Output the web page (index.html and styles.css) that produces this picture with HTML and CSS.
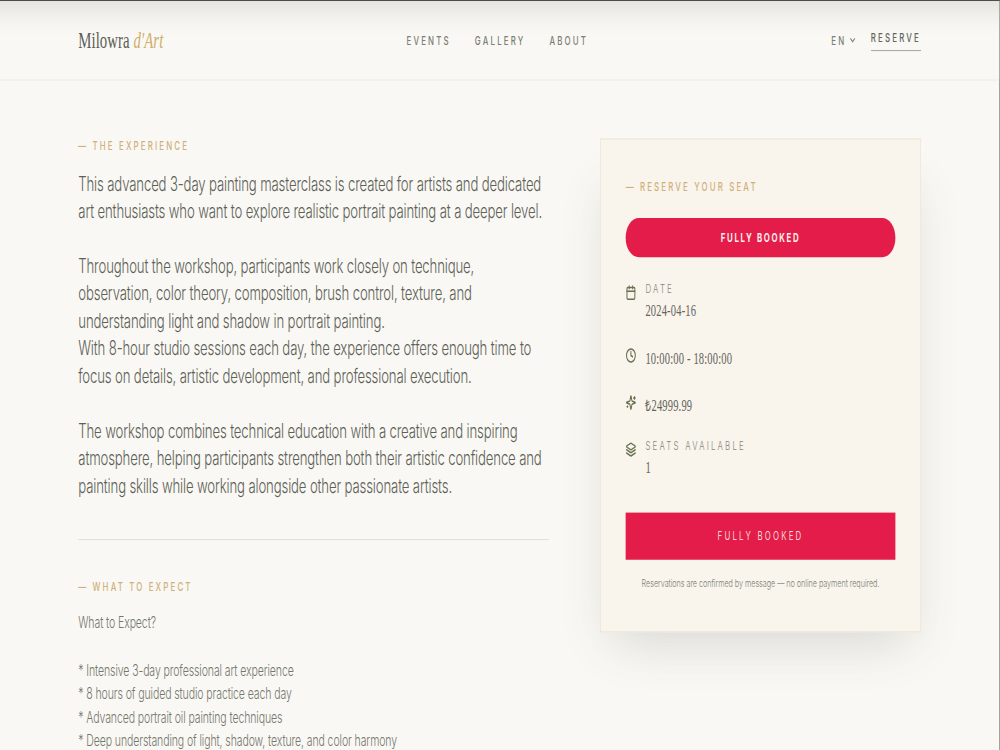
FILE: index.html
```html
<!DOCTYPE html>
<html lang="en">
<head>
<meta charset="utf-8">
<title>Milowra d'Art</title>
<link rel="stylesheet" href="styles.css">
</head>
<body>
<div class="viewport">
<div class="page">
  <header class="header">
    <div class="header-inner">
      <a class="logo"><span class="logo-name">Milowra</span> <em>d'Art</em></a>
      <nav class="nav"><a>Events</a><a>Gallery</a><a>About</a></nav>
      <div class="actions">
        <span class="lang">EN <svg width="12" height="12" viewBox="0 0 24 24"><path d="m6 9 6 6 6-6"/></svg></span>
        <a class="reserve">Reserve</a>
      </div>
    </div>
  </header>
  <main class="main">
    <div class="story">
      <section class="experience">
        <div class="eyebrow">— The Experience</div>
        <div class="lead">This advanced 3-day painting masterclass is created for artists and dedicated<br>art enthusiasts who want to explore realistic portrait painting at a deeper level.<br><br>Throughout the workshop, participants work closely on technique,<br>observation, color theory, composition, brush control, texture, and<br>understanding light and shadow in portrait painting.<br>With 8-hour studio sessions each day, the experience offers enough time to<br>focus on details, artistic development, and professional execution.<br><br>The workshop combines technical education with a creative and inspiring<br>atmosphere, helping participants strengthen both their artistic confidence and<br>painting skills while working alongside other passionate artists.</div>
      </section>
      <section class="expect">
        <div class="eyebrow">— What to Expect</div>
        <div class="list">What to Expect?<br><br>* Intensive 3-day professional art experience<br>* 8 hours of guided studio practice each day<br>* Advanced portrait oil painting techniques<br>* Deep understanding of light, shadow, texture, and color harmony</div>
      </section>
    </div>
    <aside class="card">
      <div class="eyebrow">— Reserve Your Seat</div>
      <div class="pill">Fully Booked</div>
      <div class="rows">
        <div class="row">
          <svg width="16" height="16" viewBox="0 0 24 24"><path d="M8 2v4M16 2v4M3 10h18"/><rect x="3" y="4" width="18" height="18" rx="2"/></svg>
          <div><div class="label">Date</div><div class="value">2024-04-16</div></div>
        </div>
        <div class="row">
          <svg width="16" height="16" viewBox="0 0 24 24"><circle cx="12" cy="12" r="10"/><path d="M12 6v6l4 2"/></svg>
          <div class="value">10:00:00 - 18:00:00</div>
        </div>
        <div class="row">
          <svg width="16" height="16" viewBox="0 0 24 24"><path d="M9.937 15.5A2 2 0 0 0 8.5 14.063l-6.135-1.582a.5.5 0 0 1 0-.962L8.5 9.936A2 2 0 0 0 9.937 8.5l1.582-6.135a.5.5 0 0 1 .963 0L14.063 8.5A2 2 0 0 0 15.5 9.937l6.135 1.581a.5.5 0 0 1 0 .964L15.5 14.063a2 2 0 0 0-1.437 1.437l-1.582 6.135a.5.5 0 0 1-.963 0z"/><path d="M20 3v4M22 5h-4M4 17v2M5 18H3"/></svg>
          <div class="value">₺24999.99</div>
        </div>
        <div class="row">
          <svg width="16" height="16" viewBox="0 0 24 24"><path d="m12.83 2.18a2 2 0 0 0-1.66 0L2.6 6.08a1 1 0 0 0 0 1.83l8.58 3.91a2 2 0 0 0 1.66 0l8.58-3.9a1 1 0 0 0 0-1.83Z"/><path d="m22 12-9.17 4.16a2 2 0 0 1-1.66 0L2 12M22 17l-9.17 4.16a2 2 0 0 1-1.66 0L2 17"/></svg>
          <div><div class="label">Seats Available</div><div class="value">1</div></div>
        </div>
      </div>
      <div class="button">Fully Booked</div>
      <div class="note">Reservations are confirmed by message — no online payment required.</div>
    </aside>
  </main>
</div>
</div>
</body>
</html>
```
FILE: styles.css
```css
* { box-sizing: border-box; }
html, body { margin: 0; width: 1000px; height: 750px; overflow: hidden; background: #f9f8f4; }
.viewport { width: 1000px; height: 750px; overflow: clip; }
.page {
  width: 1520px;
  height: 764px;
  overflow: hidden;
  transform: scale(.65789, .982);
  transform-origin: 0 0;
  border-top: 1px solid #4b484a;
  border-right: 1.5px solid #77757a;
  background: #f9f8f4;
  color: #5d6056;
  font-family: Inter, sans-serif;
  font-weight: 350;
}
svg { fill: none; stroke: currentColor; stroke-width: 2.3; stroke-linecap: round; stroke-linejoin: round; flex: none; }
.header {
  height: 81px;
  border-bottom: 1px solid #ecebe7;
  background: linear-gradient(#e5e4df 0, #eeede9 12px, #f6f5f1 24px, #f9f8f4 36px);
}
.header-inner { width: 1281px; height: 80px; margin-left: 119px; display: flex; justify-content: space-between; align-items: center; }
.logo { font-family: "Liberation Serif", serif; font-size: 22.5px; color: #5a5d54; font-weight: 400; letter-spacing: .1px; padding-top: 1px; }
.logo em { color: #d0ad6c; }
.nav { display: flex; gap: 36.5px; }
.nav, .actions { font-size: 12px; letter-spacing: 3.3px; text-transform: uppercase; color: #7c7f75; font-weight: 450; }
.actions { display: flex; justify-content: flex-end; align-items: center; gap: 22px; }
.lang { display: flex; align-items: center; gap: 3px; }
.lang svg { stroke-width: 2.6; }
.reserve { color: #62665b; border-bottom: 1px solid #a3a59d; padding-bottom: 5px; }
.main { width: 1281px; margin-left: 119px; padding-top: 59px; display: grid; grid-template-columns: 715px 488px; justify-content: space-between; align-items: start; }
.eyebrow { font-size: 12px; line-height: 15px; letter-spacing: 3.25px; text-transform: uppercase; color: #d0b07a; font-weight: 450; white-space: nowrap; }
.lead { margin-top: 17px; font-size: 20px; line-height: 28.03px; letter-spacing: -.215px; white-space: nowrap; }
.experience { padding-bottom: 40px; border-bottom: 1px solid #dedfd9; }
.expect { padding-top: 40px; }
.list { margin-top: 17px; font-size: 16px; line-height: 24px; letter-spacing: -.155px; color: #74776d; }
.card { height: 503px; padding: 40px 38px; border: 1px solid #e8e3d4; background: #f9f4ec; box-shadow: 0 30px 60px -20px rgba(75, 82, 70, .2); }
.pill { height: 40px; margin-top: 25px; border-radius: 20px; background: #e31c49; color: #fceceb; font-size: 12px; font-weight: 700; line-height: 40px; letter-spacing: 2.5px; text-align: center; text-transform: uppercase; }
.rows { margin-top: 24px; }
.row { display: flex; gap: 14px; min-height: 48px; color: #66704f; }
.row:first-child { height: 64px; }
.row:last-child { height: 44px; min-height: 0; }
.row svg { margin-top: 4px; }
.label { font-size: 12px; line-height: 15px; letter-spacing: 3.35px; text-transform: uppercase; color: #85877a; }
.value { font-family: "Liberation Serif", serif; font-size: 16px; font-weight: 400; line-height: 32px; color: #62645c; letter-spacing: .25px; }
.button { height: 48px; margin-top: 32px; background: #e31c49; color: #f8d5d6; font-size: 12px; line-height: 48px; letter-spacing: 3.3px; text-align: center; text-transform: uppercase; font-weight: 400; }
.note { margin-top: 16px; font-size: 11px; line-height: 16px; letter-spacing: -.07px; color: #7d7f73; text-align: center; white-space: nowrap; }
```
